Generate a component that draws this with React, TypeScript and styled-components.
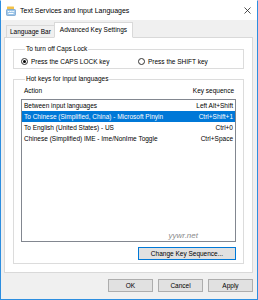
import styled, { createGlobalStyle } from "styled-components";

const GlobalStyle = createGlobalStyle`
  html, body {
    margin: 0;
    padding: 0;
    background: #ffffff;
  }
  * {
    box-sizing: border-box;
  }
`;

type Binding = {
  action: string;
  keys: string;
  selected?: boolean;
};

const bindings: Binding[] = [
  { action: "Between input languages", keys: "Left Alt+Shift" },
  {
    action: "To Chinese (Simplified, China) - Microsoft Pinyin",
    keys: "Ctrl+Shift+1",
    selected: true,
  },
  { action: "To English (United States) - US", keys: "Ctrl+0" },
  { action: "Chinese (Simplified) IME - Ime/NonIme Toggle", keys: "Ctrl+Space" },
];

const Window = styled.div`
  width: 258px;
  height: 300px;
  border: 1px solid #2d8ee0;
  border-top-color: #ffffff;
  background: #f0f0f0;
  display: flex;
  flex-direction: column;
  font-family: "Liberation Sans", Arial, sans-serif;
  font-size: 6.5px;
  color: #000;
  overflow: hidden;
`;

const TitleBar = styled.div`
  height: 19px;
  background: #ffffff;
  display: flex;
  align-items: center;
  padding: 0 6px 0 5px;
`;

const Title = styled.span`
  font-size: 7px;
  margin-left: 4px;
  color: #000;
`;

const CloseGlyph = styled.svg`
  margin-left: auto;
  width: 7px;
  height: 7px;
`;

const Body = styled.div`
  flex: 1;
  display: flex;
  flex-direction: column;
  padding: 0 4px 0 3px;
`;

const TabStrip = styled.div`
  height: 18px;
  display: flex;
  align-items: flex-end;
  padding-left: 2px;
  margin-bottom: -1px;
  position: relative;
  z-index: 1;
`;

const Tab = styled.div<{ $active?: boolean }>`
  height: ${({ $active }) => ($active ? "16px" : "13px")};
  padding: ${({ $active }) => ($active ? "0 5px" : "0 3px")};
  display: flex;
  align-items: center;
  border: 1px solid #d9d9d9;
  border-bottom-color: ${({ $active }) => ($active ? "#ffffff" : "#d9d9d9")};
  border-right-width: ${({ $active }) => ($active ? "1px" : "0")};
  background: ${({ $active }) => ($active ? "#ffffff" : "#f0f0f0")};
  padding-bottom: ${({ $active }) => ($active ? "1px" : "0")};
`;

const Panel = styled.div`
  background: #ffffff;
  border: 1px solid #d9d9d9;
  padding: 7px 8px 8px 8px;
  display: flex;
  flex-direction: column;
  gap: 6px;
`;

const Group = styled.fieldset`
  margin: 0;
  border: 1px solid #dcdcdc;
  padding: 4px 7px 3px 7px;
  min-width: 0;
`;

const Legend = styled.legend`
  padding: 0 1px;
  margin-left: 4px;
  line-height: 8px;
`;

const RadioRow = styled.div`
  display: flex;
  align-items: center;
  height: 8px;
`;

const RadioOption = styled.label<{ $width: number }>`
  display: flex;
  align-items: center;
  gap: 3px;
  width: ${({ $width }) => $width}px;
`;

const RadioDot = styled.span<{ $checked?: boolean }>`
  width: 7px;
  height: 7px;
  border-radius: 50%;
  border: 1px solid #333;
  background: #fff;
  display: flex;
  align-items: center;
  justify-content: center;
  &::after {
    content: "";
    width: 3px;
    height: 3px;
    border-radius: 50%;
    background: ${({ $checked }) => ($checked ? "#000" : "transparent")};
  }
`;

const HeaderRow = styled.div`
  display: flex;
  justify-content: space-between;
  height: 8px;
  line-height: 8px;
  padding: 0 2px 0 3px;
`;

const ListBox = styled.div`
  position: relative;
  height: 143px;
  margin-top: 4px;
  border: 1px solid #828790;
  background: #fff;
`;

const Row = styled.div<{ $selected?: boolean }>`
  height: 11px;
  display: flex;
  align-items: center;
  justify-content: space-between;
  padding: 0 2px 0 2px;
  background: ${({ $selected }) => ($selected ? "#0078d7" : "transparent")};
  color: ${({ $selected }) => ($selected ? "#ffffff" : "#000000")};
  white-space: nowrap;
`;

const Watermark = styled.span`
  position: absolute;
  right: 37px;
  bottom: 1px;
  font-size: 8px;
  font-style: italic;
  color: #8a8a8a;
`;

const ButtonRow = styled.div<{ $pad?: string }>`
  display: flex;
  justify-content: flex-end;
  gap: 5px;
  padding: ${({ $pad }) => $pad ?? "0"};
`;

const Button = styled.button<{ $width: number; $focused?: boolean }>`
  width: ${({ $width }) => $width}px;
  height: 13px;
  padding: 0;
  font-family: inherit;
  font-size: 6.5px;
  color: #000;
  background: #e1e1e1;
  border: 1px solid ${({ $focused }) => ($focused ? "#0078d7" : "#adadad")};
  border-radius: 0;
`;

const AppIcon = () => (
  <svg width="10" height="10" viewBox="0 0 10 10">
    <rect x="1" y="0.5" width="7" height="3" rx="0.5" fill="#f3c24a" />
    <rect x="0.5" y="3.5" width="9" height="6" rx="0.8" fill="#9cc5e8" stroke="#5b8fc4" strokeWidth="0.6" />
    <rect x="1.8" y="5" width="1.3" height="1" fill="#ffffff" />
    <rect x="3.6" y="5" width="1.3" height="1" fill="#ffffff" />
    <rect x="5.4" y="5" width="1.3" height="1" fill="#ffffff" />
    <rect x="7.2" y="5" width="1" height="1" fill="#ffffff" />
    <rect x="2.5" y="7" width="5" height="1" fill="#ffffff" />
  </svg>
);

export default function App() {
  return (
    <>
      <GlobalStyle />
      <Window>
        <TitleBar>
          <AppIcon />
          <Title>Text Services and Input Languages</Title>
          <CloseGlyph viewBox="0 0 7 7">
            <path d="M0.5 0.5 L6.5 6.5 M6.5 0.5 L0.5 6.5" stroke="#222" strokeWidth="0.8" />
          </CloseGlyph>
        </TitleBar>
        <Body>
          <TabStrip>
            <Tab>Language Bar</Tab>
            <Tab $active>Advanced Key Settings</Tab>
          </TabStrip>
          <Panel>
            <Group>
              <Legend>To turn off Caps Lock</Legend>
              <RadioRow>
                <RadioOption $width={117}>
                  <RadioDot $checked />
                  Press the CAPS LOCK key
                </RadioOption>
                <RadioOption $width={90}>
                  <RadioDot />
                  Press the SHIFT key
                </RadioOption>
              </RadioRow>
            </Group>
            <Group>
              <Legend>Hot keys for input languages</Legend>
              <HeaderRow>
                <span>Action</span>
                <span>Key sequence</span>
              </HeaderRow>
              <ListBox>
                {bindings.map((b) => (
                  <Row key={b.action} $selected={b.selected}>
                    <span>{b.action}</span>
                    <span>{b.keys}</span>
                  </Row>
                ))}
                <Watermark>yywr.net</Watermark>
              </ListBox>
              <ButtonRow $pad="5px 0 0 0">
                <Button $width={98} $focused>
                  Change Key Sequence...
                </Button>
              </ButtonRow>
            </Group>
          </Panel>
          <ButtonRow $pad="6px 0 0 0">
            <Button $width={45}>OK</Button>
            <Button $width={45}>Cancel</Button>
            <Button $width={45}>Apply</Button>
          </ButtonRow>
        </Body>
      </Window>
    </>
  );
}
